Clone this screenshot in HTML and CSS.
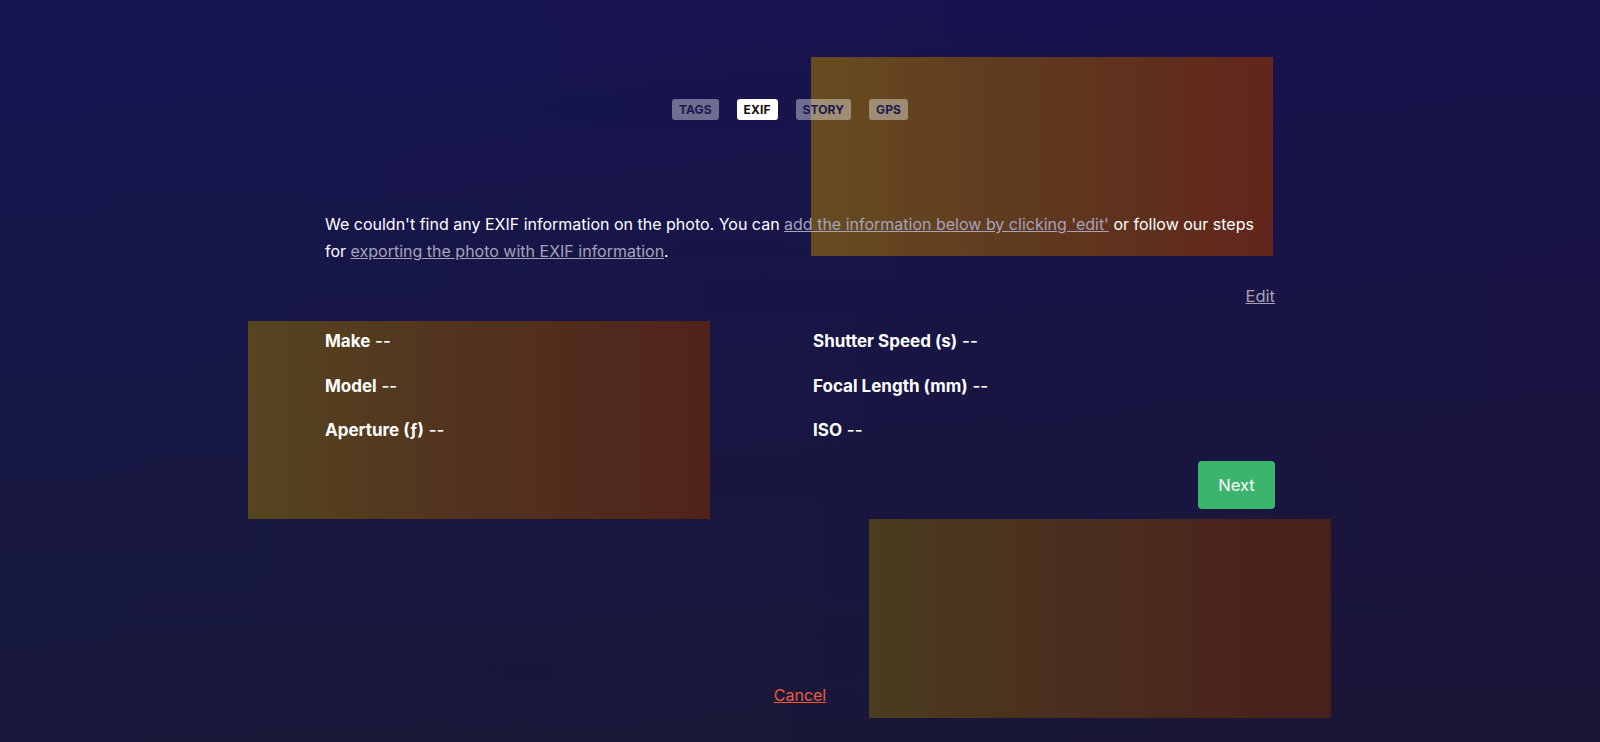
FILE: index.html
```html
<!DOCTYPE html>
<html lang="en">
<head>
<meta charset="utf-8">
<title>EXIF</title>
<link rel="stylesheet" href="styles.css">
</head>
<body>
<div class="page">
  <div class="deco deco-top"></div>
  <div class="deco deco-left"></div>
  <div class="deco deco-bottom"></div>

  <nav class="tabs">
    <span class="tab">Tags</span>
    <span class="tab tab-active">Exif</span>
    <span class="tab">Story</span>
    <span class="tab">GPS</span>
  </nav>

  <main class="content">
    <p class="intro">We couldn't find any EXIF information on the photo. You can <a class="muted-link" href="#">add the information below by clicking 'edit'</a> or follow our steps for <a class="muted-link" href="#">exporting the photo with EXIF information</a>.</p>

    <div class="edit-row"><a class="muted-link" href="#">Edit</a></div>

    <div class="fields">
      <div class="field"><span class="label">Make</span> <span class="value">--</span></div>
      <div class="field"><span class="label">Shutter Speed (s)</span> <span class="value">--</span></div>
      <div class="field"><span class="label">Model</span> <span class="value">--</span></div>
      <div class="field"><span class="label">Focal Length (mm)</span> <span class="value">--</span></div>
      <div class="field"><span class="label">Aperture (ƒ)</span> <span class="value">--</span></div>
      <div class="field"><span class="label">ISO</span> <span class="value">--</span></div>
    </div>

    <div class="actions"><button class="btn-next" type="button">Next</button></div>
  </main>

  <div class="cancel-row"><a class="cancel" href="#">Cancel</a></div>
</div>
</body>
</html>
```

FILE: styles.css
```css
* { box-sizing: border-box; }

html, body {
  margin: 0;
  padding: 0;
}

body {
  width: 1600px;
  height: 742px;
  overflow: hidden;
  font-family: Inter, "Noto Sans", "Liberation Sans", sans-serif;
  color: #ffffff;
  background:
    linear-gradient(to right, rgba(40, 0, 30, 0) 0%, rgba(40, 0, 30, 0.12) 100%),
    linear-gradient(to bottom, #161553 0%, #18193a 100%);
}

.page {
  position: relative;
  height: 742px;
  padding-top: 99px;
}

.deco {
  position: absolute;
  width: 462px;
  height: 199px;
  z-index: 0;
}

.deco-top {
  left: 811px;
  top: 57px;
  background: linear-gradient(to right, #674c20 0%, #5f3a1f 45%, #62251a 100%);
}

.deco-left {
  left: 248px;
  top: 321px;
  height: 198px;
  background: linear-gradient(to right, #56451f 0%, #52331f 45%, #50231b 100%);
}

.deco-bottom {
  left: 869px;
  top: 519px;
  background: linear-gradient(to right, #4b3c1e 0%, #4a2e1e 45%, #4a1f1a 100%);
}

.tabs {
  position: relative;
  z-index: 1;
  display: flex;
  justify-content: center;
  gap: 18px;
  padding-right: 20px;
}

.tab {
  display: inline-flex;
  align-items: center;
  height: 21px;
  padding: 0 7px;
  border-radius: 3px;
  font-size: 12px;
  font-weight: 700;
  letter-spacing: 0.1px;
  text-transform: uppercase;
  color: #1d1850;
  background: rgba(255, 255, 255, 0.38);
}

.tab-active {
  background: #ffffff;
  color: #111111;
}

.content {
  position: relative;
  z-index: 1;
  width: 950px;
  margin: 91px auto 0;
}

.intro {
  margin: 0;
  font-size: 16px;
  line-height: 27px;
}

.muted-link {
  color: #a6a3b8;
  text-decoration: underline;
}

.edit-row {
  margin-top: 18px;
  text-align: right;
  font-size: 16.5px;
  line-height: 27px;
}

.fields {
  display: grid;
  grid-template-columns: 1fr 1fr;
  column-gap: 26px;
  row-gap: 17.5px;
  margin-top: 18px;
}

.field {
  font-size: 17px;
  line-height: 27px;
}

.label {
  font-weight: 700;
}

.value {
  font-weight: 500;
}

.actions {
  display: flex;
  justify-content: flex-end;
  margin-top: 17px;
}

.btn-next {
  height: 48px;
  width: 77px;
  border: none;
  border-radius: 4px;
  background: #3bb56e;
  color: #ffffff;
  font-family: inherit;
  font-size: 16.5px;
}

.cancel-row {
  position: relative;
  z-index: 1;
  text-align: center;
  margin-top: 173px;
  font-size: 16px;
  line-height: 27px;
}

.cancel {
  color: #ec5a3c;
  text-decoration: underline;
}
```
